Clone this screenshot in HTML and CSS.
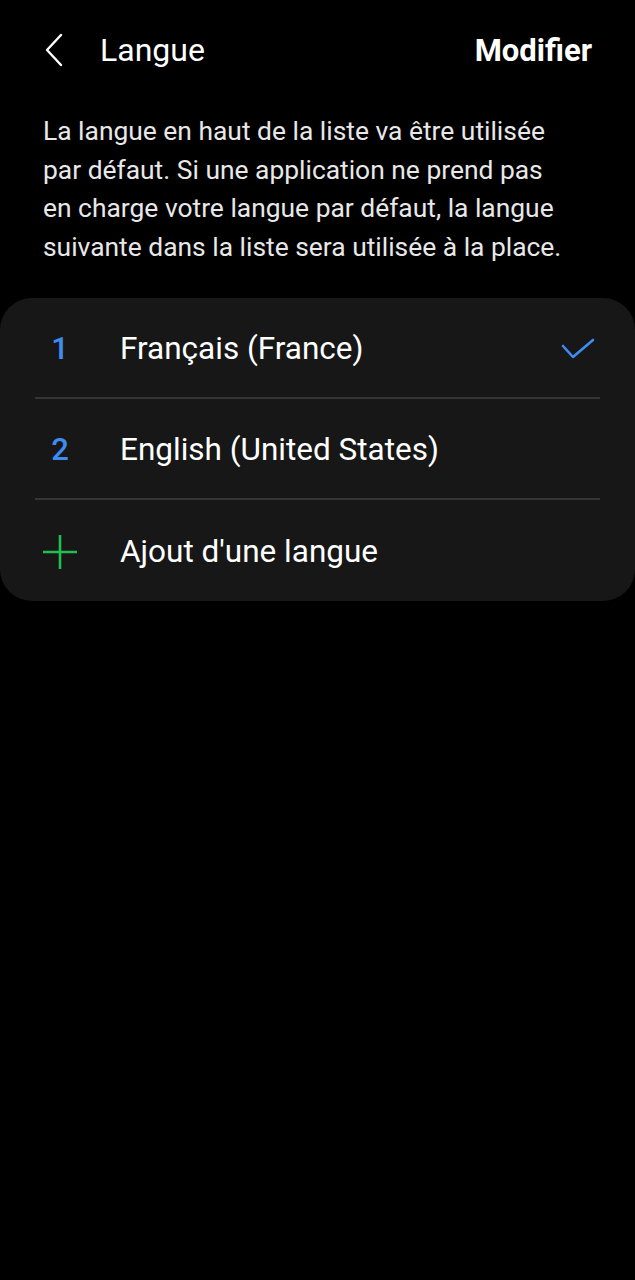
FILE: index.html
```html
<!DOCTYPE html>
<html lang="fr">
<head>
  <meta charset="UTF-8" />
  <meta name="viewport" content="width=device-width, initial-scale=1.0" />
  <title>Langue</title>
  <link rel="stylesheet" href="styles.css">
</head>
<body>
  <div class="header">
    <button class="back" aria-label="Retour">
      <svg width="20" height="34" viewBox="0 0 20 34">
        <path d="M17 2 L3 17 L17 32" fill="none" stroke="#ffffff" stroke-width="2.4" stroke-linecap="round" stroke-linejoin="round" />
      </svg>
    </button>
    <h1>Langue</h1>
    <button class="edit">Modifier</button>
  </div>

  <p class="intro">La langue en haut de la liste va être utilisée<br>par défaut. Si une application ne prend pas<br>en charge votre langue par défaut, la langue<br>suivante dans la liste sera utilisée à la place.</p>

  <div class="card">
    <div class="row">
      <span class="lead num">1</span>
      <span class="label">Français (France)</span>
      <svg class="check" width="36" height="24" viewBox="0 0 36 24">
        <path d="M3 9 L13 20 L33 3" fill="none" stroke="#3e8cf0" stroke-width="2.6" stroke-linecap="round" stroke-linejoin="round" />
      </svg>
    </div>
    <div class="row">
      <span class="lead num">2</span>
      <span class="label">English (United States)</span>
    </div>
    <div class="row">
      <span class="lead">
        <svg width="36" height="36" viewBox="0 0 36 36">
          <path d="M18 1 V35 M1 18 H35" stroke="#1fbf50" stroke-width="2.6" />
        </svg>
      </span>
      <span class="label">Ajout d'une langue</span>
    </div>
  </div>
</body>
</html>
```

FILE: styles.css
```css
* {
  box-sizing: border-box;
}

body {
  margin: 0;
  min-height: 100vh;
  background: #000000;
  color: #ffffff;
  font-family: Roboto, "Noto Sans", sans-serif;
}

button {
  border: none;
  background: none;
  color: inherit;
  font-family: inherit;
  padding: 0;
  cursor: pointer;
}

.header {
  display: flex;
  align-items: center;
  height: 100px;
  padding: 0 43px 0 44px;
}

.back {
  display: flex;
  width: 22px;
  height: 34px;
  margin-right: 34px;
}

h1 {
  margin: 0;
  font-size: 32px;
  font-weight: 400;
  flex: 1;
}

.edit {
  font-size: 31px;
  font-weight: 700;
}

.intro {
  margin: 12px 0 0;
  padding: 0 43px;
  font-size: 26.4px;
  line-height: 38.7px;
  color: #e8e8e8;
  white-space: nowrap;
}

.card {
  margin-top: 31px;
  background: #171717;
  border-radius: 32px;
}

.row {
  display: flex;
  align-items: center;
  height: 101px;
  margin: 0 35px;
  padding-top: 3px;
  border-bottom: 2px solid #353535;
}

.row:last-child {
  border-bottom: none;
}

.lead {
  display: flex;
  justify-content: center;
  width: 50px;
  margin-right: 35px;
}

.num {
  font-size: 31px;
  font-weight: 500;
  color: #3e8cf0;
}

.label {
  flex: 1;
  font-size: 31.5px;
}

.check {
  margin-right: 4px;
}
```
